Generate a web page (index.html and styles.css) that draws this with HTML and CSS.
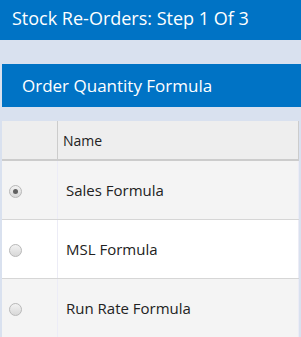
FILE: index.html
```html
<!DOCTYPE html>
<html lang="en">
<head>
    <meta charset="UTF-8">
    <meta name="viewport" content="width=device-width, initial-scale=1.0">
    <title>Stock Re-Orders</title>
    <link rel="stylesheet" href="styles.css">
</head>
<body>
    <div class="title-bar">Stock Re-Orders: Step 1 Of 3</div>
    <div class="section-bar">Order Quantity Formula</div>
    <table class="grid">
        <thead>
            <tr>
                <th class="sel"></th>
                <th>Name</th>
            </tr>
        </thead>
        <tbody>
            <tr class="alt">
                <td class="sel"><span class="radio checked"></span></td>
                <td>Sales Formula</td>
            </tr>
            <tr>
                <td class="sel"><span class="radio"></span></td>
                <td>MSL Formula</td>
            </tr>
            <tr class="alt">
                <td class="sel"><span class="radio"></span></td>
                <td>Run Rate Formula</td>
            </tr>
        </tbody>
    </table>
</body>
</html>
```
FILE: styles.css
```css
body {
    margin: 0;
    background: #d9e1ef;
    font-family: "Open Sans", sans-serif;
    color: #222;
}
.title-bar {
    height: 40px;
    line-height: 37px;
    padding-left: 12px;
    background: #0073c5;
    color: white;
    font-size: 18px;
}
.section-bar {
    height: 43px;
    line-height: 43px;
    margin: 24px 0 14px 2px;
    padding-left: 20px;
    background: #0073c5;
    color: white;
    font-size: 17px;
}
.grid {
    margin-left: 2px;
    width: 297px;
    border-collapse: collapse;
    font-size: 15px;
}
.grid th {
    height: 38px;
    padding: 0 5px;
    text-align: left;
    font-weight: normal;
    font-size: 14px;
    background: #eeeeee;
    border-right: 1px solid #cccccc;
    border-bottom: 2px solid #cccccc;
}
.grid td {
    height: 58px;
    padding: 0 8px;
    background: white;
    border-right: 1px solid #ececf6;
    border-bottom: 1px solid #d6d6d6;
}
.grid tr.alt td {
    background: #f4f4f4;
}
.grid .sel {
    width: 55px;
    padding: 0;
    text-align: left;
}
.grid td.sel {
    padding-left: 7px;
    width: 48px;
}
.radio {
    display: inline-block;
    width: 11px;
    height: 11px;
    border: 1px solid #b9b9b9;
    border-radius: 50%;
    background: linear-gradient(#f2f2f2, #d8d8d8);
    vertical-align: middle;
    position: relative;
}
.radio.checked::after {
    content: "";
    position: absolute;
    left: 3px;
    top: 3px;
    width: 5px;
    height: 5px;
    border-radius: 50%;
    background: #606060;
}
```
